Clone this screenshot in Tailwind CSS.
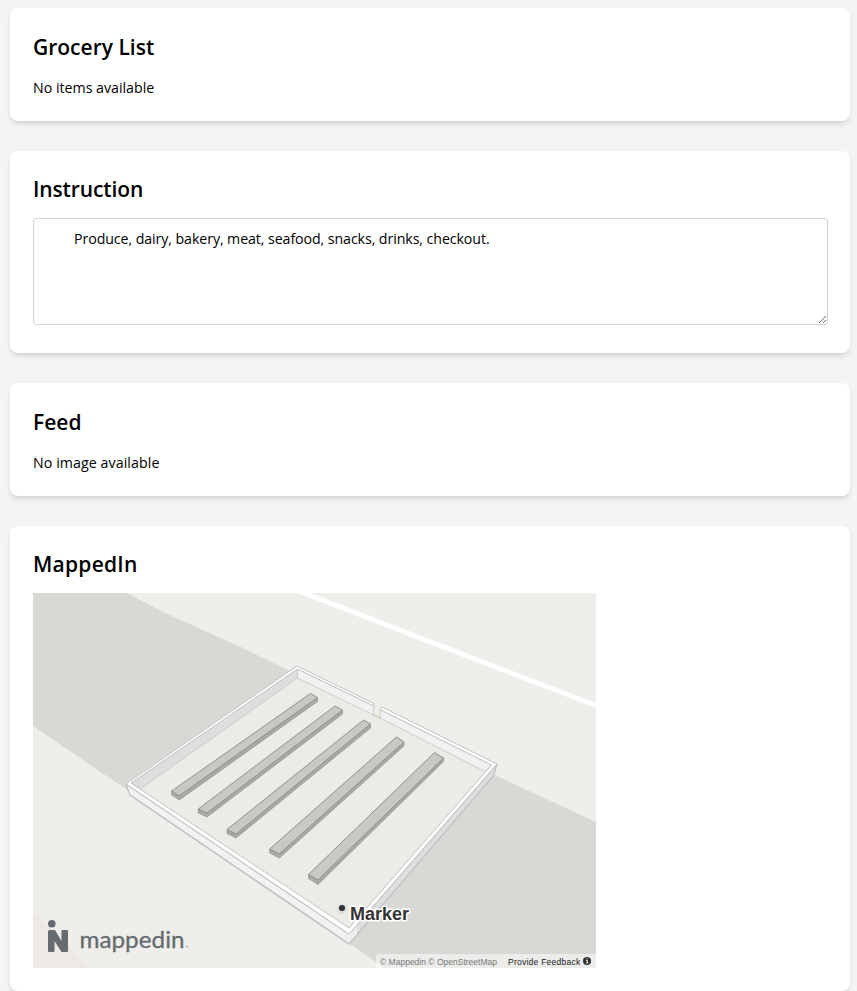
<!DOCTYPE html>
<html lang="en">
<head>
    <meta charset="UTF-8">
    <meta name="viewport" content="width=device-width, initial-scale=1.0">
    <title>Grocery List</title>
    <script src="https://cdn.jsdelivr.net/npm/@tailwindcss/browser@4"></script>
</head>
<body class="h-[991px] overflow-hidden bg-gray-100 font-['Open_Sans',sans-serif] text-[14.2px] leading-[22px] text-black">

    <div class="flex flex-col gap-[30px] pt-2 pl-[10px] pr-[7px]">

        <div class="h-[113px] rounded-lg bg-white px-[23px] pt-6 shadow-md">
            <h2 class="mb-[15px] text-[21px] font-semibold leading-[30px]">Grocery List</h2>
            <p>No items available</p>
        </div>

        <div class="h-[202px] rounded-lg bg-white p-[23px] shadow-md">
            <h2 class="mb-[14px] text-[21px] font-semibold leading-[30px] tracking-[-0.12px]">Instruction</h2>
            <textarea id="instruction" rows="4" class="block h-[107px] w-[795px] rounded-[3px] border border-gray-300 pt-[9px] pr-2 pl-10 tracking-[-0.08px]">Produce, dairy, bakery, meat, seafood, snacks, drinks, checkout.</textarea>
        </div>

        <div class="h-[113px] rounded-lg bg-white px-[23px] pt-6 shadow-md">
            <h2 class="mb-[15px] text-[21px] font-semibold leading-[30px]">Feed</h2>
            <p class="tracking-[0.08px]">No image available</p>
        </div>

        <div class="h-[465px] rounded-lg bg-white p-[23px] shadow-md">
            <h2 class="mb-[14px] text-[21px] font-semibold leading-[30px] tracking-[0.25px]">MappedIn</h2>
            <div class="relative h-[375px] w-[563px] overflow-hidden bg-[#efeeea]">
                <svg class="block" width="563" height="375" viewBox="33 593 563 375" stroke-linejoin="round">
                    <!-- ground -->
                    <path d="M33 593H127L163 612L243 648L300 676L140 799L127 790L33 726Z" fill="#d8d9d4"/>
                    <path d="M490 773L596 822V968H384L345 940Z" fill="#d8d9d4"/>
                    <path d="M33 911L90 968H33Z" fill="#edeae5"/>
                    <path d="M290 588L304 593L467 656L596 705.500L606 709.500" fill="none" stroke="#fff" stroke-width="4.8"/>

                    <!-- outer walls -->
                    <path d="M126 784L349 934V944L130 795Z" fill="#f2f2f2" stroke="#c2c2c4" stroke-width="1.3"/>
                    <path d="M497 764L349 934V944L494 775Z" fill="#dedee0" stroke="#c2c2c4" stroke-width="1.2"/>
                    <path d="M343 931L349 934L357 926V935L349 944L343 939Z" fill="#eeeeef"/>
                    <path d="M130 795L349 944L357 935" fill="none" stroke="#c2c2c4" stroke-width="1.3"/>

                    <!-- floor -->
                    <path d="M131 783L297 669L374 706L373 714.500L380 718V709L492 765L349 928Z" fill="#ecebe6"/>

                    <!-- inner walls -->
                    <path d="M131 783L297.500 669V678L141 788.500Z" fill="#dededf" stroke="#c6c6c8" stroke-width=".8"/>
                    <path d="M297.500 669L374 706L373 714.700L297.500 678Z" fill="#f1f1f2" stroke="#c6c6c8" stroke-width=".8"/>
                    <path d="M380 709.500L492 765L485 771.500L380 718Z" fill="#f1f1f2" stroke="#c6c6c8" stroke-width=".8"/>
                    <path d="M373 714.700L380 718" stroke="#c9bea8" stroke-width="1"/>

                    <!-- top of the walls -->
                    <path d="M374 703.500L297 666L126 784L349 934L497 764L382 707L380 709.500L491.500 765L349 928L131 783L297.500 669L374 706Z" fill="#fff" stroke="#c2c2c4" stroke-width="1"/>

                    <!-- shelves -->
                    <g fill="#aaa9a5" stroke="#92918c" stroke-width=".7">
                        <path d="M171.700 791L179.300 795.700L317.500 697.500V701.500L179.300 800L171.700 795Z"/>
                        <path d="M198.300 809L207 813L342.500 710V714L207 817L198.300 813Z"/>
                        <path d="M227 829.500L236 834L370.500 724V728L236 838L227 833.500Z"/>
                        <path d="M269.700 849L279.300 854L404 742V746L279.300 858L269.700 853Z"/>
                        <path d="M308.500 874.500L318 880L443.500 758V761.500L318 884.500L308.500 878.500Z"/>
                    </g>
                    <g fill="#c9c8c3" stroke="#92918c" stroke-width="1">
                        <path d="M171.700 791L310.500 693.500L317.500 697.500L179.300 795.700Z"/>
                        <path d="M198.300 809L335 706L342.500 710L207 813Z"/>
                        <path d="M227 829.500L363.500 720L370.500 724L236 834Z"/>
                        <path d="M269.700 849L396.500 737L404 742L279.300 854Z"/>
                        <path d="M308.500 874.500L434.500 752.500L443.500 758L318 880Z"/>
                    </g>

                    <!-- marker -->
                    <circle cx="342" cy="909" r="5" fill="#000" opacity=".07"/>
                    <circle cx="342" cy="908" r="3" fill="#2e2f32"/>
                    <text x="350" y="920" textLength="59" lengthAdjust="spacingAndGlyphs" font-family="Liberation Sans, sans-serif" font-size="17.500" font-weight="700" fill="#333" stroke="#fff" stroke-width="3" paint-order="stroke">Marker</text>

                    <!-- logo -->
                    <g fill="#656b6e">
                        <circle cx="51.800" cy="923.800" r="3.800"/>
                        <path d="M49.500 930H55L61.500 941V931Q61.500 930 62.500 930H67Q68 930 68 931V951Q68 952 67 952H61.500L54.500 941V951Q54.500 952 53.500 952H49Q48 952 48 951V931.500Q48 930 49.500 930Z"/>
                        <text x="79.500" y="947.500" textLength="105" lengthAdjust="spacingAndGlyphs" font-family="Lato, sans-serif" font-size="24" font-weight="400" stroke="#656b6e" stroke-width=".3">mappedin</text>
                        <circle cx="187" cy="946.500" r="1.100" opacity=".45"/>
                    </g>
                </svg>

                <div class="absolute right-0 bottom-0 flex h-[14px] w-[220px] items-center rounded-tl bg-white/50 pl-1 font-['Liberation_Sans',sans-serif] text-[8.5px] leading-[14px] whitespace-nowrap">
                    <span class="w-[128px] pt-0.5 text-[#777]">© Mappedin © OpenStreetMap</span>
                    <span class="w-[75px] pt-0.5 tracking-[0.25px] text-[#222]">Provide Feedback</span>
                    <svg width="8" height="8" viewBox="0 0 8 8">
                        <circle cx="4" cy="4" r="4" fill="#333"/>
                        <path d="M3 3.500H4.400V6M3 6H5.200M3.500 1.800H4.500" fill="none" stroke="#fff" stroke-width=".9"/>
                    </svg>
                </div>
            </div>
        </div>

    </div>

</body>
</html>
